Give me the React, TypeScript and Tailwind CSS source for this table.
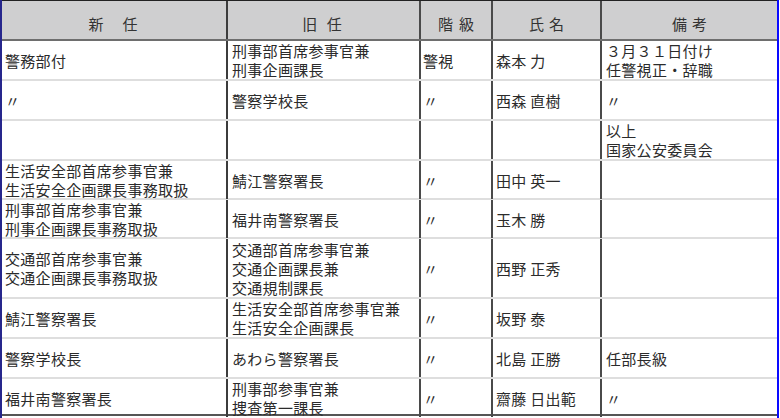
import { FC } from "react";

type Row = {
   h: string;
   next: string[];
   prev: string[];
   rank: string;
   name: string;
   note: string[];
};

const rows: Row[] = [
   { h: "h-[40px]", next: ["警務部付"], prev: ["刑事部首席参事官兼", "刑事企画課長"], rank: "警視", name: "森本 力", note: ["３月３１日付け", "任警視正・辞職"] },
   { h: "h-[40px]", next: ["〃"], prev: ["警察学校長"], rank: "〃", name: "西森 直樹", note: ["〃"] },
   { h: "h-[40px]", next: [], prev: [], rank: "", name: "", note: ["以上", "国家公安委員会"] },
   { h: "h-[39px]", next: ["生活安全部首席参事官兼", "生活安全企画課長事務取扱"], prev: ["鯖江警察署長"], rank: "〃", name: "田中 英一", note: [] },
   { h: "h-[39px]", next: ["刑事部首席参事官兼", "刑事企画課長事務取扱"], prev: ["福井南警察署長"], rank: "〃", name: "玉木 勝", note: [] },
   { h: "h-[60px]", next: ["交通部首席参事官兼", "交通企画課長事務取扱"], prev: ["交通部首席参事官兼", "交通企画課長兼", "交通規制課長"], rank: "〃", name: "西野 正秀", note: [] },
   { h: "h-[40px]", next: ["鯖江警察署長"], prev: ["生活安全部首席参事官兼", "生活安全企画課長"], rank: "〃", name: "坂野 泰", note: [] },
   { h: "h-[40px]", next: ["警察学校長"], prev: ["あわら警察署長"], rank: "〃", name: "北島 正勝", note: ["任部長級"] },
   { h: "h-[35px]", next: ["福井南警察署長"], prev: ["刑事部参事官兼", "捜査第一課長"], rank: "〃", name: "齋藤 日出範", note: ["〃"] },
];

const Lines: FC<{ lines: string[] }> = ({ lines }) => (
   <div className="flex flex-col">
      {lines.map((line, i) => (
         <span key={i} className="whitespace-nowrap">
            {line}
         </span>
      ))}
   </div>
);

const App: FC = (): JSX.Element => {
   return (
      <div className="flex h-[418px] w-[780px] bg-white font-['Noto_Sans_CJK_JP',sans-serif] text-[15px] leading-[19px] tracking-[0.3px] text-[#2b2b2b]">
         {/* Frame left */}
         <div className="w-[2px] bg-[#26268c]" />

         <div className="flex w-[775px] flex-col">
            <div className="border-t border-b-2 border-t-[#222] border-b-[#555]">
               {/* Header */}
               <div className="grid h-[40px] grid-cols-[224px_193px_72px_109px_177px] border-b-2 border-[#6e6e6e] bg-[#cfcfd0] text-[#333] *:flex *:items-center *:justify-center *:pt-[7px]">
                  <div className="tracking-[2px]">新　任</div>
                  <div className="border-l-2 border-[#3c3c3c] tracking-[3px]">旧 任</div>
                  <div className="border-l-2 border-[#4a4a4a] pl-[6px] tracking-[6px]">階級</div>
                  <div className="border-l-2 border-[#4a4a4a] pl-[5px] tracking-[5px]">氏名</div>
                  <div className="border-l-2 border-[#4a4a4a] pl-[5px] tracking-[5px]">備考</div>
               </div>

               {/* Body */}
               {rows.map((row, i) => (
                  <div
                     key={i}
                     className={`grid grid-cols-[224px_193px_72px_109px_177px] border-b-2 border-[#dedede] last:border-b-0 *:flex *:items-center ${row.h}`}
                  >
                     <div className="pl-[3px]">
                        <Lines lines={row.next} />
                     </div>
                     <div className="border-l-2 border-[#3c3c3c] pl-[4px]">
                        <Lines lines={row.prev} />
                     </div>
                     <div className="border-l-2 border-[#4a4a4a] pl-[2px]">{row.rank}</div>
                     <div className="border-l-2 border-[#4a4a4a] pl-[3px]">{row.name}</div>
                     <div className="border-l-2 border-[#4a4a4a] pl-[4px]">
                        <Lines lines={row.note} />
                     </div>
                  </div>
               ))}
            </div>
         </div>

         {/* Frame right */}
         <div className="w-[2px] bg-[#0a0aff]" />
      </div>
   );
};

export default App;
